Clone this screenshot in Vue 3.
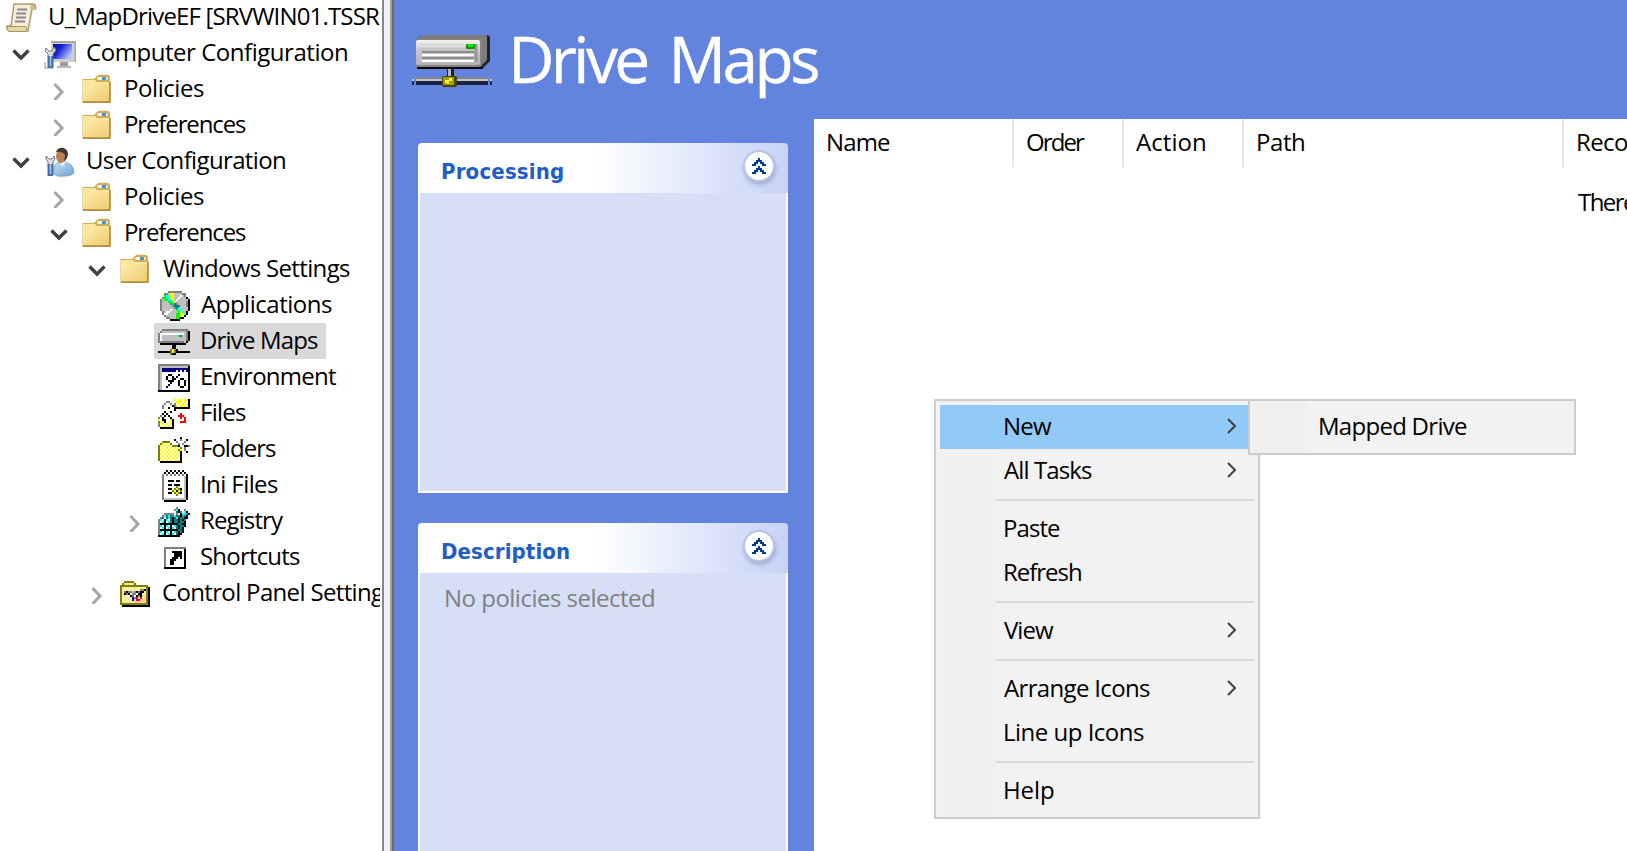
<script setup>
const FAMILY = '"Open Sans", "Noto Sans", sans-serif'
const HEAD_FAMILY = '"DejaVu Sans Condensed", "Open Sans", sans-serif'
const pen = document.createElement('canvas').getContext('2d')

// Spacing that makes a label's drawn letters span exactly `width` pixels.
// Letters that begin with a stem keep one pixel of their side bearing.
function fit(text, width, font = `24px ${FAMILY}`, gap = 0) {
  pen.font = font
  const m = pen.measureText(text)
  const ink = m.actualBoundingBoxLeft + m.actualBoundingBoxRight
  const keep = m.actualBoundingBoxLeft < -1.5 ? 1 : 0
  return {
    letterSpacing: ((width - keep - gap - ink) / (text.length - 1)).toFixed(3) + 'px',
    marginLeft: (m.actualBoundingBoxLeft + keep).toFixed(2) + 'px',
    wordSpacing: gap + 'px'
  }
}

const palette = {
  k: '#000000', g: '#808080', s: '#c0c0c0', w: '#ffffff', G: '#00ff00', Y: '#ffff00',
  o: '#808000', C: '#00ffff', t: '#008080', N: '#000080', R: '#ff0000', B: '#0000ff', p: '#f8f0a0', y: '#f0e890', q: '#ffd0a0'
}

const sprites = {
  cd: [
    '....ggggggg....', '..ggsYYssssgg..', '..GCCYYssswsg..', '.gGCCYYsswsssk.', 'gsGGCCYswsssssk',
    'gsssGGCYsssssgk', 'gssssgGtgssssgk', 'gsssssgtttsssgk', 'gssssssgtCssssk', 'gsssswssGCCsssk',
    '.gswwssssGYCsk.', '.gwwssssGGYYCk.', '..gsssssGGYYk..', '...ggsssGGkk...', '.....kkkkk.....'],
  drive: [
    '..ggggggggggggg.', '.gssssssssssssgk', 'gwwwwwwwwwwwwsgk', 'gwssssssssGtssgk', 'gwssssssssssssgk',
    'gwssssssssssssgk', 'gggggggggggggsk.', '.kkkkkkkkkkkkk..', '.......kk.......', '.......kk.......',
    '......oyok......', 'kkkkkkoYokkkkkkk', '......okk.......'],
  env: [
    'gggggggggggggggg', 'gssssssssssssssk', 'gsNNNNNNNNNNNNNk', 'gsNNNNNNNwNwNwNk', 'gswwwwwwwwwwwwwk',
    'gswwwkkwwwkwwwwk', 'gswwkwwkwkwwwwwk', 'gswwkwwkkwwkkwwk', 'gswwwkkkwwkwwkwk', 'gswwwwkwwwkwwkwk',
    'gswwwkwwwwkwwkwk', 'gswwkwwwwwwkkwwk', 'gswwwwwwwwwwwwwk', 'kkkkkkkkkkkkkkkk'],
  files: [
    '........YwYYwYYk', '....gg..wYYYwYwk', '...g..g.gwYwYwYk', '..g....kgYwYYYwk', '..g..k..kkkkkkkk',
    '.....ww.k.......', '...kw.k.........', '..kwkw.....R....', '.gwkwk....RRR...', 'gwkwwwk....R.R..',
    'YwkkwwYk.....R..', 'gYwkwwYk...RRR..', 'gwYwYwYk........', 'gYwYwYwk........', '.kkkkkkk........'],
  folders: [
    '...........k....', '........k..g..k.', '..oooo...g...g..', '.oYwYwo...gwg...', 'oYwYwYwoookw.kkg',
    'owYwYwYwYwYgwg..', 'oYwYwYwYwYgY.g..', 'owYwYwYwYwYk..k.', 'oYwYwYwYwYwk....', 'owYwYwYwYwYk....',
    'oYwYwYwYwYwk....', 'owYwYwYwYwYk....', '.kkkkkkkkkkk....'],
  ini: [
    '..k.k.k.k.k..', '.k.k.k.k.k.k.', 'gwgwgwgwgwgwk', 'gwwwwwwwwwwsk', 'gwwwwwwwwwwsk', 'gwwkkkwkkwwsk',
    'gwwwwwwwwwwsk', 'gwwkkwkkkwwsk', 'gwwwwwwowwwsk', 'gwwkkwoYokwsk', 'gwwwwoYkYowsk', 'gwwkkwoYokwsk',
    'gwwwwwwowwwsk', 'gwwwwwwwwwwsk', 'gsssssssssssk', '.kkkkkkkkkkk.'],
  registry: [
    '.........g......', '........gCk..g..', '.........tkgwCk.', '...ggggg.gwkCCtk', '..gCtCtgCttkgtk.',
    '.gtwtCtktCkttkk.', 'gCwkCwtkttktkt..', 'gwCkwCtkttkttk..', 'gkkkkkkkkkttkk..', 'gCwkCwkwCtkttk..',
    'gwCkwCkCwtktk...', 'gkkkkkkkkkttk...', 'gCwkCwkwCtktk...', 'gwCkwCkCwtkk....', 'kkkkkkkkkkk.....'],
  shortcut: [
    'ggggggggggg', 'gwwwwwwwwwk', 'gwwwkkkkkwk', 'gwwwwkkkkwk', 'gwwwwkkkkwk', 'gwwwkkkwkwk',
    'gwwkkkwwwwk', 'gwwkkwwwwwk', 'gwwkkwwwwwk', 'gwwwwwwwwwk', 'kkkkkkkkkkk'],
  control: [
    '..ooooo........', '.oypypyo.......', 'oooooooooooooo.', 'oppppppppppppok', 'opppppppppggkok',
    'opgkggsgkgkkpok', 'opkgkwggwkkppok', 'opppwkgwkgkpqok', 'opppppBgRwRpqok', 'opppppBqRRqqqok',
    'oppppppqqqqqqok', 'ooooooooooooook', '.kkkkkkkkkkkkkk']
}

const cells = name => sprites[name].flatMap((row, y) =>
  [...row].map((c, x) => ({ x, y, fill: palette[c] })).filter(c => c.fill))

const tree = [
  { t: 'U_MapDriveEF [SRVWIN01.TSSR', w: 331, lvl: 0, icon: 'scroll' },
  { t: 'Computer Configuration', w: 260, lvl: 1, icon: 'computer', ex: 'open' },
  { t: 'Policies', w: 79, lvl: 2, icon: 'folder', ex: 'shut' },
  { t: 'Preferences', w: 121, lvl: 2, icon: 'folder', ex: 'shut' },
  { t: 'User Configuration', w: 198, lvl: 1, icon: 'user', ex: 'open' },
  { t: 'Policies', w: 79, lvl: 2, icon: 'folder', ex: 'shut' },
  { t: 'Preferences', w: 121, lvl: 2, icon: 'folder', ex: 'open' },
  { t: 'Windows Settings', w: 187, lvl: 3, icon: 'folder', ex: 'open' },
  { t: 'Applications', w: 131, lvl: 4, icon: 'cd' },
  { t: 'Drive Maps', w: 117, lvl: 4, icon: 'drive', sel: true },
  { t: 'Environment', w: 135, lvl: 4, icon: 'env' },
  { t: 'Files', w: 45, lvl: 4, icon: 'files' },
  { t: 'Folders', w: 75, lvl: 4, icon: 'folders' },
  { t: 'Ini Files', w: 77, lvl: 4, icon: 'ini' },
  { t: 'Registry', w: 83, lvl: 4, icon: 'registry', ex: 'shut' },
  { t: 'Shortcuts', w: 99, lvl: 4, icon: 'shortcut' },
  { t: 'Control Panel Setting', w: 221, lvl: 3, icon: 'control', ex: 'shut' }
]

const panels = [
  { t: 'Processing', w: 121, cls: 'first' },
  { t: 'Description', w: 127, cls: 'second', body: 'No policies selected' }
]

const columns = [
  { t: 'Name', w: 63, cls: 'c-name' },
  { t: 'Order', w: 58, cls: 'c-order' },
  { t: 'Action', w: 69, cls: 'c-action' },
  { t: 'Path', w: 47, cls: 'c-path' },
  { t: 'Reco', w: 51, cls: 'c-reco' }
]

const menu = [
  { t: 'New', w: 48, sub: true, hot: true },
  { t: 'All Tasks', w: 88, sub: true },
  { sep: true },
  { t: 'Paste', w: 56 },
  { t: 'Refresh', w: 77 },
  { sep: true },
  { t: 'View', w: 50, sub: true },
  { sep: true },
  { t: 'Arrange Icons', w: 146, sub: true },
  { t: 'Line up Icons', w: 140 },
  { sep: true },
  { t: 'Help', w: 50 }
]
</script>

<template>
  <div class="window">
    <svg class="defs" width="0" height="0">
      <defs>
        <linearGradient id="gFolder" x1="0" y1="0" x2="1" y2="1">
          <stop offset="0" stop-color="#ffeeb0" /><stop offset="1" stop-color="#efca70" />
        </linearGradient>
        <linearGradient id="gScreen" x1="0" y1="0" x2="1" y2="0.6">
          <stop offset="0" stop-color="#0008b8" /><stop offset="0.4" stop-color="#1420d0" /><stop offset="1" stop-color="#b8c4ff" />
        </linearGradient>
        <linearGradient id="gBody" x1="0" y1="0" x2="1" y2="1">
          <stop offset="0" stop-color="#c4e0f8" /><stop offset="1" stop-color="#6fa2d2" />
        </linearGradient>
        <linearGradient id="gFront" x1="0" y1="0" x2="0" y2="1">
          <stop offset="0" stop-color="#f4f4f4" /><stop offset="0.45" stop-color="#c6c6c6" /><stop offset="1" stop-color="#b4b4b4" />
        </linearGradient>
      </defs>
    </svg>

    <nav class="tree">
      <div v-for="(n, i) in tree" :key="i" class="row" :style="{ paddingLeft: n.lvl * 38 + (n.ex ? -26 : 6) + 'px' }">
        <svg v-if="n.ex" class="expander" :class="n.ex" viewBox="0 0 18 18">
          <path v-if="n.ex === 'open'" d="M1.500 4.500 L9 12 L16.500 4.500" />
          <path v-else d="M4.500 2 L12 10 L4.500 18" />
        </svg>
        <div class="node" :class="{ selected: n.sel }">
          <span class="icon" :class="'i-' + n.icon">
            <svg v-if="sprites[n.icon]" :width="sprites[n.icon][0].length * 2" :height="sprites[n.icon].length * 2"
              :viewBox="`0 0 ${sprites[n.icon][0].length} ${sprites[n.icon].length}`" shape-rendering="crispEdges">
              <rect v-for="c in cells(n.icon)" :key="c.x + '-' + c.y" :x="c.x" :y="c.y" width="1" height="1" :fill="c.fill" />
            </svg>
            <svg v-else-if="n.icon === 'folder'" width="32" height="32" viewBox="0 0 32 32">
              <path d="M0.500 5 H12 L15 2 Q16 0.800 18 0.800 H25 Q28 1 28 4 V29 H0.500 Z" fill="#d0aa55" />
              <rect x="1" y="8" width="26" height="20" fill="url(#gFolder)" />
              <path d="M1 6 H13 L15 8 H27 V10 H1 Z" fill="#fbe6a0" />
              <rect x="15" y="3" width="11" height="3" rx="1.500" fill="#f4f1de" /><rect x="20" y="3" width="4" height="3" fill="#4294dd" />
              <path d="M1 28 H28 V8" fill="none" stroke="#ad8836" stroke-width="1.500" />
            </svg>
            <svg v-else-if="n.icon === 'scroll'" width="32" height="32" viewBox="0 0 32 32">
              <path d="M8 2 H28 Q30 3 29.500 7 H26 L22 29 H3 Q0.500 28 1 24 H5 Z" fill="#f5eed5" stroke="#a99d78" stroke-width="1.500" />
              <path d="M25 3 Q23 5 25.500 8 H29 Q30 3 28 3 Z" fill="#cfbc88" />
              <path d="M1 24.500 H20 Q22 26 20 29.500 H3 Q0.500 28 1 24.500 Z" fill="#e5d7a6" stroke="#a69664" />
              <path d="M11 7.500 H21 M10 11.500 H20 M10 15.500 H20 M9 19.500 H19" stroke="#8d8798" stroke-width="1.800" />
            </svg>
            <svg v-else-if="n.icon === 'computer'" width="32" height="32" viewBox="0 0 32 32">
              <path d="M7 3 H32 V24 H7 Z" fill="#d0d0ca" /><path d="M7 3 H32 V5 H7 Z M30.500 3 H32 V24 H30.500 Z" fill="#a6a6a6" />
              <rect x="9" y="6" width="19" height="15" fill="url(#gScreen)" />
              <rect x="16" y="24" width="8" height="4" fill="#9c9c9c" /><rect x="13" y="28" width="14" height="2" fill="#b8b8b8" />
              <path d="M2 10 L5 13 H8 L10 9 L12 12 L9 16 V19 H4 V16 L1 13 Z" fill="#d9dddd" stroke="#747c80" />
              <rect x="3.500" y="18" width="6" height="12" rx="1" fill="#3d6ea5" /><path d="M6.500 18 V28" stroke="#abc8e9" stroke-width="1.600" />
              <path d="M1 24 V30 H10" fill="none" stroke="#8a8a8a" />
            </svg>
            <svg v-else width="32" height="32" viewBox="0 0 32 32">
              <path d="M10 28 Q9 16 17 16 H21 Q30 18 30 27 Q26 31 13 30 Z" fill="url(#gBody)" stroke="#7599b8" stroke-width=".8" />
              <path d="M16 15 L18 21 L22 16 Z" fill="#eef6fb" />
              <ellipse cx="17" cy="10" rx="5" ry="7" fill="#b88055" /><path d="M12 6 Q14 1 20 2 Q26 5 23 12 L20 16 L21 9 Q18 5 12 6 Z" fill="#3d3830" />
              <path d="M2 10 L5 13 H8 L10 10 L11 13 L9 16 V19 H4 V16 L2 13 Z" fill="#d9dddd" stroke="#747c80" />
              <rect x="3.500" y="18" width="6" height="12" rx="1" fill="#3d6ea5" /><path d="M6.500 18 V28" stroke="#abc8e9" stroke-width="1.600" />
            </svg>
          </span>
          <span class="label" :style="fit(n.t, n.w)">{{ n.t }}</span>
        </div>
      </div>
    </nav>

    <div class="splitter"></div>

    <main class="main">
      <header class="banner">
        <svg class="big-drive" width="80" height="54" viewBox="0 0 80 54">
          <path d="M9 1 H76 L78 3 V27 L71 34 H6 L3 30 V8 Z" fill="#1d2230" />
          <path d="M9 1 H75 V26 L69 32 V6 H5 Z" fill="#7c7c7c" />
          <rect x="3" y="5" width="67" height="28" rx="3" fill="#858585" />
          <rect x="4" y="6" width="64" height="25" rx="2" fill="url(#gFront)" />
          <rect x="8" y="10" width="56" height="18" fill="#c4c4c4" />
          <path d="M8 12 H54" stroke="#dedede" stroke-width="3" />
          <path d="M10 18 H62 M10 24 H62" stroke="#8e8e8e" stroke-width="2" />
          <path d="M10 21 H62 M10 27 H62" stroke="#fff" stroke-width="2" />
          <path d="M64 10 V28" stroke="#959595" stroke-width="3" />
          <rect x="54" y="10" width="9" height="5" rx="1.500" fill="#079607" /><rect x="56" y="10" width="5" height="3" fill="#0bea0b" />
          <rect x="5" y="33" width="66" height="2" fill="#080808" />
          <rect x="35" y="35" width="7" height="9" fill="#222" /><rect x="36" y="35" width="3" height="9" fill="#b8b8b8" />
          <path d="M0 44 H80" stroke="#7f8594" stroke-width="2" /><path d="M0 46 H80" stroke="#c3c3c3" stroke-width="2" /><path d="M0 49 H80" stroke="#1b2541" stroke-width="4" />
          <path d="M3 43 V51 M77 43 V51" stroke="#6484de" stroke-width="2" />
          <rect x="30" y="42" width="15" height="11" rx="2" fill="#454500" /><rect x="31" y="43" width="11" height="8" fill="#a8a000" />
          <path d="M33 49 V46 H37 V44 H40 V47 H37 V50 Z" fill="#f4f060" />
        </svg>
        <h1 class="title" :style="fit('Drive Maps', 305, '64px &quot;Open Sans&quot;, &quot;Noto Sans&quot;, sans-serif', 9)">Drive Maps</h1>
      </header>

      <div class="content">
        <aside class="side">
          <section v-for="p in panels" :key="p.t" class="panel" :class="p.cls">
            <div class="panel-head">
              <span class="panel-title" :style="fit(p.t, p.w, `bold 22px ${HEAD_FAMILY}`)">{{ p.t }}</span>
              <button class="collapse" type="button">
                <svg width="14" height="16" viewBox="0 0 14 16" shape-rendering="crispEdges">
                  <path d="M6 0h2v2h2v2h2v2h2v2h-4v-2h-2v-2h-2v2h-2v2h-4v-2h2v-2h2v-2h2z" />
                  <path d="M6 8h2v2h2v2h2v2h2v2h-4v-2h-2v-2h-2v2h-2v2h-4v-2h2v-2h2v-2h2z" />
                </svg>
              </button>
            </div>
            <div class="panel-body">
              <span v-if="p.body" class="note" :style="fit(p.body, 209)">{{ p.body }}</span>
            </div>
          </section>
        </aside>

        <section class="list">
          <div class="columns">
            <div v-for="c in columns" :key="c.t" class="column" :class="c.cls"><span :style="fit(c.t, c.w)">{{ c.t }}</span></div>
          </div>
          <div class="empty"><span :style="fit('There', 58)">There</span></div>
        </section>
      </div>
    </main>

    <div class="menu context">
      <template v-for="(m, i) in menu" :key="i">
        <div v-if="m.sep" class="separator"></div>
        <div v-else class="item" :class="{ hot: m.hot }">
          <span :style="fit(m.t, m.w)">{{ m.t }}</span>
          <svg v-if="m.sub" class="arrow" width="12" height="16" viewBox="0 0 12 16"><path d="M2 1 L9 8 L2 15" /></svg>
        </div>
      </template>
    </div>
    <div class="menu submenu">
      <div class="item"><span :style="fit('Mapped Drive', 148)">Mapped Drive</span></div>
    </div>
  </div>
</template>

<style>
body { margin: 0; overflow: hidden; }
</style>

<style scoped>
.window {
  position: relative;
  display: flex;
  width: 1627px;
  height: 851px;
  overflow: hidden;
  background: #fff;
  color: #000;
  font: 24px/34px "Open Sans", "Noto Sans", sans-serif;
  font-kerning: auto;
}
.window span, .title { white-space: nowrap; }
.defs { position: absolute; }

.tree { width: 380px; flex: none; overflow: hidden; margin-top: -1px; }
.row { display: flex; align-items: center; height: 36px; box-sizing: border-box; }
.expander { width: 18px; height: 18px; margin: 3px 10px 0 0; flex: none; }
.expander path { fill: none; stroke-width: 3; }
.expander.open path { stroke: #404040; stroke-width: 3.4; }
.expander.shut path { stroke: #a6a6a6; }
.node { display: flex; height: 36px; padding: 0 8px 0 4px; }
.row > .node:first-child { margin-left: -4px; }
.node.selected { background: #d9d9d9; }
.icon { display: flex; width: 32px; height: 36px; align-items: center; justify-content: center; padding-top: 1px; box-sizing: border-box; flex: none; }
.i-cd, .i-ini, .i-shortcut { padding-left: 2px; }
.i-cd { padding-top: 2px; }
.i-control { padding-right: 2px; }
.label { display: block; padding-left: 11px; }

.splitter {
  flex: none;
  width: 6px;
  margin-left: 2px;
  background: #f0f0f0;
  border-left: 2px solid #828790;
  border-right: 2px solid #a0a0a0;
  box-shadow: 2px 0 0 #696969;
}

.main { flex: 1; min-width: 0; display: flex; flex-direction: column; margin-left: 2px; background: #6384de; }
.banner { display: flex; height: 119px; box-sizing: border-box; padding: 34px 0 0 18px; }
.big-drive { flex: none; }
.title { margin: -18px 0 0; padding-left: 21px; color: #fff; font-size: 64px; font-weight: 400; line-height: 86px; -webkit-text-stroke: 0.4px #fff; }
.content { display: flex; flex: 1; min-height: 0; }
.side { width: 370px; padding: 24px 26px 0 24px; flex: none; display: flex; flex-direction: column; gap: 30px; }
.panel { display: flex; flex-direction: column; flex: none; }
.panel.first { height: 350px; }
.panel.second { height: 400px; }
.panel-head {
  display: flex;
  justify-content: space-between;
  height: 50px;
  box-sizing: border-box;
  padding: 0 13px 0 24px;
  border-radius: 4px 4px 0 0;
  background: linear-gradient(90deg, #fff 0 48%, #c6d3f7 100%);
}
.panel-title { font: bold 22px/28px "DejaVu Sans Condensed", "Open Sans", sans-serif; color: #215dc6; padding-top: 15px; }
.collapse {
  display: flex;
  align-items: center;
  justify-content: center;
  width: 32px;
  height: 32px;
  margin-top: 7px;
  padding: 0;
  border: 2px solid #b9c0e4;
  border-radius: 50%;
  background: #fff;
  box-shadow: 1px 3px 4px #a3aed4;
}
.collapse path { fill: #0038a0; }
.panel-body { flex: 1; display: flex; align-items: flex-start; padding: 8px 25px; border: 2px solid #fff; border-top: 0; background: #d6dff7; }
.note { color: #808080; }

.list { flex: 1; min-width: 0; background: #fff; overflow: hidden; }
.columns { display: flex; height: 48px; line-height: 46px; }
.column { flex: none; box-sizing: border-box; padding-left: 13px; border-right: 2px solid #e5e5e5; }
.c-name { width: 200px; }
.c-order { width: 110px; }
.c-action { width: 120px; padding-left: 12px; }
.c-path { width: 320px; }
.c-reco { width: 120px; }
.empty { padding: 18px 0 0 764px; }

.menu {
  position: absolute;
  box-sizing: border-box;
  padding: 4px;
  border: 2px solid #ccc;
  background: linear-gradient(90deg, #f2f2f2 0 4px, #f0f0f0 4px 60px, #f2f2f2 60px);
}
.context { left: 934px; top: 399px; width: 326px; height: 420px; }
.submenu { left: 1248px; top: 399px; width: 328px; height: 56px; }
.item { display: flex; justify-content: space-between; height: 44px; padding: 0 16px 0 64px; line-height: 42px; }
.submenu .item { padding-left: 65px; }
.item.hot { background: #91c9f7; }
.arrow { margin-top: 13px; }
.arrow path { fill: none; stroke: #404040; stroke-width: 2; }
.separator { height: 2px; margin: 6px 0 6px 56px; background: #d7d7d7; }
</style>
